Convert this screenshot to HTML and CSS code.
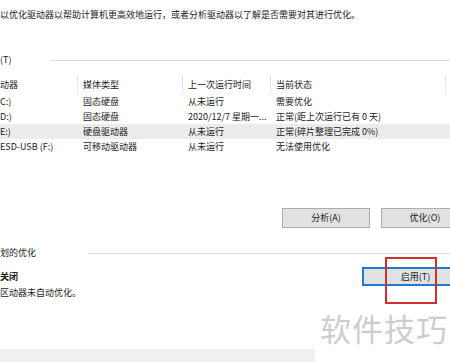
FILE: index.html
```html
<!DOCTYPE html>
<html lang="zh-CN">
<head>
<meta charset="utf-8">
<title>优化驱动器</title>
<link rel="stylesheet" href="styles.css">
</head>
<body>
<div class="page">
  <p class="desc">以优化驱动器以帮助计算机更高效地运行，或者分析驱动器以了解是否需要对其进行优化。</p>

  <div class="group-head">
    <span class="gtitle gtitle-drives">(T)</span><span class="rule"></span>
  </div>

  <div class="list">
    <div class="row head">
      <span class="cell c1">动器</span>
      <span class="cell">媒体类型</span>
      <span class="cell">上一次运行时间</span>
      <span class="cell">当前状态</span>
    </div>
    <div class="row">
      <span class="cell c1">C:)</span>
      <span class="cell">固态硬盘</span>
      <span class="cell">从未运行</span>
      <span class="cell">需要优化</span>
    </div>
    <div class="row">
      <span class="cell c1">D:)</span>
      <span class="cell">固态硬盘</span>
      <span class="cell">2020/12/7 星期一...</span>
      <span class="cell">正常(距上次运行已有 0 天)</span>
    </div>
    <div class="row selected">
      <span class="cell c1">E:)</span>
      <span class="cell">硬盘驱动器</span>
      <span class="cell">从未运行</span>
      <span class="cell">正常(碎片整理已完成 0%)</span>
    </div>
    <div class="row">
      <span class="cell c1">ESD-USB (F:)</span>
      <span class="cell">可移动驱动器</span>
      <span class="cell">从未运行</span>
      <span class="cell">无法使用优化</span>
    </div>
  </div>

  <div class="actions">
    <button class="btn">分析(A)</button>
    <button class="btn">优化(O)</button>
  </div>

  <div class="group-head sched-head">
    <span class="gtitle gtitle-sched">划的优化</span><span class="rule"></span>
  </div>

  <div class="sched-body">
    <div class="sched-text">
      <div class="state">关闭</div>
      <div class="note">区动器未自动优化。</div>
    </div>
    <button class="btn btn-primary">启用(T)</button>
  </div>

  <div class="footer"></div>
</div>

<div class="highlight-box"></div>
<div class="watermark">软件技巧</div>
</body>
</html>
```

FILE: styles.css
```css
html, body {
  margin: 0;
  padding: 0;
  width: 450px;
  height: 362px;
  overflow: hidden;
  background: #ffffff;
}

body {
  position: relative;
  font-family: "Noto Sans CJK SC", "Microsoft YaHei", sans-serif;
  font-size: 9px;
  color: #222222;
}

.page {
  display: flex;
  flex-direction: column;
}

.desc {
  margin: 9px 0 0 0;
  line-height: 12px;
  white-space: nowrap;
}

.group-head {
  display: flex;
  align-items: center;
  margin-top: 33px;
  height: 12px;
  line-height: 12px;
}

.gtitle {
  flex: none;
  white-space: nowrap;
}

.gtitle-drives { width: 50px; }
.gtitle-sched { width: 88px; }

.rule {
  flex: 1;
  height: 1px;
  background: #dcdcdc;
}

.list {
  margin-top: 9px;
  display: flex;
  flex-direction: column;
}

.row {
  display: grid;
  grid-template-columns: 78px 105px 88px 175px;
  height: 15px;
  line-height: 15px;
  white-space: nowrap;
}

.row.head {
  height: 19px;
  line-height: 19px;
}

.row.head .cell {
  border-right: 1px solid #e6e6e6;
}

.row.selected {
  background: #ececec;
}

.cell {
  padding-left: 5px;
  overflow: hidden;
}

.cell.c1 {
  padding-left: 0;
}

.actions {
  margin-top: 54px;
  display: flex;
  gap: 11px;
  padding-left: 282px;
}

.btn {
  flex: none;
  width: 88px;
  height: 20px;
  margin: 0;
  padding: 0;
  border: 1px solid #adadad;
  background: #e1e1e1;
  font-family: inherit;
  font-size: 9px;
  color: #222222;
  line-height: 18px;
}

.sched-head {
  margin-top: 19px;
}

.sched-body {
  display: flex;
  justify-content: space-between;
  align-items: flex-start;
}

.sched-text {
  margin-top: 12px;
  display: flex;
  flex-direction: column;
  gap: 4px;
  line-height: 12px;
}

.state {
  font-weight: bold;
}

.btn-primary {
  width: 107px;
  height: 19px;
  margin-top: 8px;
  margin-right: -19px;
  border: 2px solid #1f7ad1;
  line-height: 15px;
}

.footer {
  margin-top: 50px;
  width: 315px;
  height: 13px;
  background: #f0f0f0;
}

.highlight-box {
  position: absolute;
  left: 385px;
  top: 257px;
  width: 52px;
  height: 47px;
  box-sizing: border-box;
  border: 2px solid #d22f2f;
}

.watermark {
  position: absolute;
  left: 320px;
  top: 309px;
  font-size: 31px;
  line-height: 38px;
  letter-spacing: 1px;
  color: #cdcdcd;
  white-space: nowrap;
}
```
